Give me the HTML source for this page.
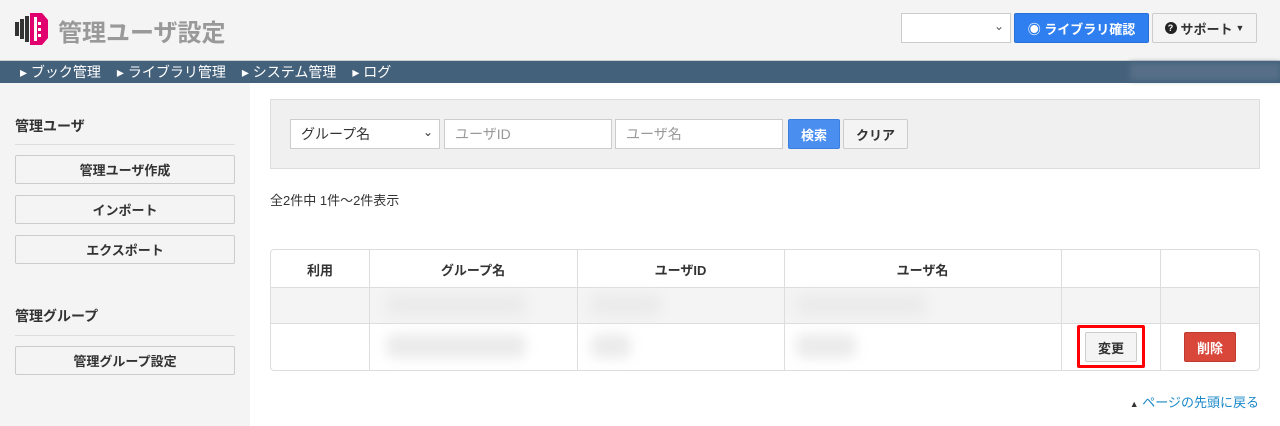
<!DOCTYPE html><html><head><meta charset="utf-8"><style>
*{box-sizing:border-box;margin:0;padding:0}
body{width:1280px;height:426px;overflow:hidden;font-family:"Liberation Sans","Noto Sans CJK JP",sans-serif;background:#fff;position:relative;font-size:13px;color:#333}
.a{position:absolute}
.btn{position:absolute;border:1px solid #ccc;background:#f4f4f4;border-radius:2px;font-weight:bold;font-size:13px;display:flex;align-items:center;justify-content:center;color:#333}
.inp{position:absolute;border:1px solid #ccc;background:#fff;font-size:14px;color:#999;display:flex;align-items:center;padding-left:10px}
.blur{position:absolute;background:#ebebeb;filter:blur(6px);border-radius:8px}
.nav span{margin-right:16px}
</style></head><body>
<div class="a" style="left:0;top:0;width:1280px;height:60px;background:#f4f4f4"></div>
<svg class="a" style="left:15px;top:13px" width="34" height="32" viewBox="0 0 34 32">
<rect x="0" y="9" width="4" height="14" fill="#333"/><rect x="5" y="6" width="4" height="20" fill="#333"/><rect x="10" y="3" width="4" height="26" fill="#333"/>
<path d="M15 0 L27 0 L33 7 L33 25 L27 32 L15 32 Z" fill="#e0006e"/>
<rect x="19" y="4" width="3" height="24" fill="#fff"/><rect x="23" y="9" width="3" height="3" fill="#fff"/><rect x="23" y="15" width="3" height="3" fill="#fff"/><rect x="23" y="21" width="3" height="3" fill="#fff"/></svg>
<div class="a" style="left:58px;top:13px;font-size:24px;font-weight:bold;color:#999">管理ユーザ設定</div>
<div class="a" style="left:901px;top:13px;width:110px;height:30px;border:1px solid #ccc;background:#fff"><span class="a" style="right:6px;top:5px;font-size:12px;color:#555">⌄</span></div>
<div class="btn" style="left:1014px;top:13px;width:135px;height:30px;background:#2f7ff0;border-color:#2a6fd6;color:#fff">◉ ライブラリ確認</div>
<div class="btn" style="left:1152px;top:13px;width:105px;height:30px"><span style="display:inline-block;width:12px;height:12px;border-radius:6px;background:#222;color:#fff;font-size:9px;line-height:12px;text-align:center;margin-right:4px">?</span>サポート<span style="font-size:9px;margin-left:3px">▼</span></div>
<div class="a nav" style="left:0;top:60px;width:1280px;height:23px;background:#44617b;color:#fff;font-size:14px;line-height:23px;padding-left:20px;border-top:1px solid #ccc"><span>▸ ブック管理</span><span>▸ ライブラリ管理</span><span>▸ システム管理</span><span>▸ ログ</span></div>
<div class="a" style="left:1130px;top:63px;width:150px;height:17px;background:#566f87;filter:blur(3px)"></div>
<div class="a" style="left:0;top:83px;width:250px;height:343px;background:#f4f4f4"></div>
<div class="a" style="left:15px;top:116px;font-weight:bold;font-size:14px">管理ユーザ</div>
<div class="a" style="left:15px;top:144px;width:220px;border-top:1px solid #ddd"></div>
<div class="btn" style="left:15px;top:155px;width:220px;height:29px">管理ユーザ作成</div>
<div class="btn" style="left:15px;top:195px;width:220px;height:29px">インポート</div>
<div class="btn" style="left:15px;top:235px;width:220px;height:29px">エクスポート</div>
<div class="a" style="left:15px;top:306px;font-weight:bold;font-size:14px">管理グループ</div>
<div class="a" style="left:15px;top:335px;width:220px;border-top:1px solid #ddd"></div>
<div class="btn" style="left:15px;top:346px;width:220px;height:29px">管理グループ設定</div>
<div class="a" style="left:270px;top:99px;width:990px;height:70px;background:#f0f0f0;border:1px solid #ddd"></div>
<div class="inp" style="left:290px;top:119px;width:150px;height:30px;color:#333">グループ名<span class="a" style="right:6px;top:5px;font-size:12px">⌄</span></div>
<div class="inp" style="left:444px;top:119px;width:168px;height:30px">ユーザID</div>
<div class="inp" style="left:615px;top:119px;width:168px;height:30px">ユーザ名</div>
<div class="btn" style="left:788px;top:119px;width:52px;height:30px;background:#4a8ef0;border-color:#3a7ee0;color:#fff">検索</div>
<div class="btn" style="left:843px;top:119px;width:65px;height:30px">クリア</div>
<div class="a" style="left:270px;top:190px;font-size:13px">全2件中 1件～2件表示</div>
<div class="a" style="left:270px;top:249px;width:990px;height:122px;border:1px solid #ddd;border-radius:4px;overflow:hidden">
<div class="a" style="left:0;top:37px;width:990px;height:37px;background:#f4f4f4;border-top:1px solid #ddd;border-bottom:1px solid #ddd"></div>
<div class="a" style="left:98px;top:0;height:122px;border-left:1px solid #ddd"></div>
<div class="a" style="left:306px;top:0;height:122px;border-left:1px solid #ddd"></div>
<div class="a" style="left:513px;top:0;height:122px;border-left:1px solid #ddd"></div>
<div class="a" style="left:790px;top:0;height:122px;border-left:1px solid #ddd"></div>
<div class="a" style="left:889px;top:0;height:122px;border-left:1px solid #ddd"></div>
<div class="a" style="left:0;top:10px;width:98px;text-align:center;font-weight:bold">利用</div>
<div class="a" style="left:98px;top:10px;width:208px;text-align:center;font-weight:bold">グループ名</div>
<div class="a" style="left:306px;top:10px;width:207px;text-align:center;font-weight:bold">ユーザID</div>
<div class="a" style="left:513px;top:10px;width:277px;text-align:center;font-weight:bold">ユーザ名</div>
<div class="blur" style="left:115px;top:44px;width:140px;height:22px"></div>
<div class="blur" style="left:320px;top:44px;width:70px;height:22px"></div>
<div class="blur" style="left:525px;top:44px;width:130px;height:22px"></div>
<div class="blur" style="left:115px;top:84px;width:140px;height:24px"></div>
<div class="blur" style="left:320px;top:84px;width:40px;height:24px"></div>
<div class="blur" style="left:525px;top:84px;width:60px;height:24px"></div>
</div>
<div class="a" style="left:1077px;top:325px;width:68px;height:43px;border:3px solid #f00;border-radius:2px"></div>
<div class="btn" style="left:1085px;top:332px;width:52px;height:30px">変更</div>
<div class="btn" style="left:1184px;top:332px;width:52px;height:30px;background:#d9463a;border-color:#c03a30;color:#fff">削除</div>
<div class="a" style="right:21px;top:392px;color:#1a88c9;font-size:13px"><span style="color:#333;font-size:9px">▲</span> ページの先頭に戻る</div>
</body></html>
